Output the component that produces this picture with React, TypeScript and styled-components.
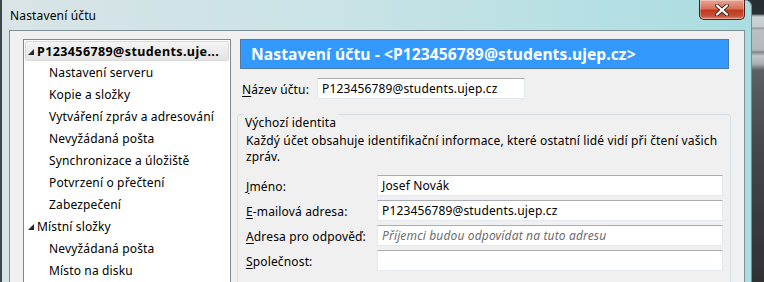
import React from "react";
import styled, { createGlobalStyle } from "styled-components";

const GlobalStyle = createGlobalStyle`
  html, body { margin: 0; padding: 0; }
  body {
    background: #2b3136;
    overflow: hidden;
    font-family: "Noto Sans", "Open Sans", sans-serif;
    letter-spacing: 0.15px;
  }
`;

const Desktop = styled.div`
  width: 764px;
  height: 282px;
  overflow: hidden;
  display: flex;
  align-items: flex-start;
  background: linear-gradient(
    180deg,
    #262d33 0px,
    #262d33 14px,
    #7c858b 15px,
    #cdd2d5 17px,
    #c6cbce 27px,
    #8e969b 28px,
    #b9bfc3 30px,
    #b3b9bd 50px,
    #7d868b 52px,
    #c2c7ca 56px,
    #a8aeb2 64px,
    #5b6165 70px,
    #45494c 140px,
    #2f3133 282px
  );
`;

const Window = styled.div`
  width: 736px;
  height: 300px;
  flex-shrink: 0;
  display: flex;
  flex-direction: column;
  border-left: 2px solid #3b474d;
  border-top-right-radius: 7px;
  padding: 0 7px;
  background: linear-gradient(90deg, #d9e4e6 0%, #c9e3e6 45%, #a9dde1 100%);
  box-shadow: inset -1px 0 0 #6d8f96;
`;

const TitleBar = styled.div`
  height: 30px;
  display: flex;
  justify-content: space-between;
  align-items: flex-start;
`;

const Title = styled.div`
  padding: 9px 0 0 1px;
  font-size: 12px;
  line-height: 14px;
  color: #000;
`;

const CloseButton = styled.div`
  width: 46px;
  height: 20px;
  box-sizing: border-box;
  display: flex;
  align-items: center;
  justify-content: center;
  border: 1px solid #4f1e16;
  border-top: none;
  border-radius: 0 0 5px 5px;
  background: linear-gradient(180deg, #e8a594 0%, #d9705a 45%, #c0391f 55%, #c7503a 85%, #e08a6e 100%);
  box-shadow: inset 0 0 0 1px rgba(255, 255, 255, 0.35);
`;

const Client = styled.div`
  flex: 1;
  display: flex;
  align-items: stretch;
  background: #f0f0f0;
  border: 1px solid #7f9197;
  border-bottom: none;
  padding: 8px 13px 0 13px;
`;

const Tree = styled.div`
  width: 208px;
  box-sizing: border-box;
  flex-shrink: 0;
  background: #fff;
  border: 1px solid #828790;
  padding: 1px;
  display: flex;
  flex-direction: column;
`;

const TreeRow = styled.div<{ $level: number; $selected?: boolean; $bold?: boolean }>`
  height: ${(p) => (p.$selected ? 20 : 22)}px;
  flex-shrink: 0;
  box-sizing: border-box;
  display: flex;
  align-items: center;
  padding-left: ${(p) => (p.$level === 0 ? 2 : 23)}px;
  font-size: ${(p) => (p.$bold ? 12.5 : 12)}px;
  letter-spacing: ${(p) => (p.$bold ? 0.4 : 0.15)}px;
  font-weight: ${(p) => (p.$bold ? 700 : 400)};
  color: #000;
  white-space: nowrap;
  border: 1px solid ${(p) => (p.$selected ? "#d9d9d9" : "transparent")};
  border-radius: 2px;
  background: ${(p) => (p.$selected ? "linear-gradient(180deg, #f4f4f4, #e4e4e4)" : "transparent")};
`;

const Expander = styled.svg`
  width: 6px;
  height: 6px;
  margin: 2px 3px 0 0;
  flex-shrink: 0;
`;

const RightCol = styled.div`
  width: 494px;
  margin-left: 6px;
  display: flex;
  flex-direction: column;
`;

const Header = styled.div`
  height: 30px;
  box-sizing: border-box;
  margin: 0 2px 0 3px;
  padding-left: 10px;
  display: flex;
  align-items: center;
  background: #3399ff;
  border: 1px solid #4d7aa8;
  color: #fff;
  font-size: 15.6px;
  letter-spacing: 0.1px;
  font-weight: 700;
  white-space: nowrap;
`;

const AccountRow = styled.div`
  display: flex;
  align-items: center;
  margin-top: 9px;
  padding-left: 5px;
`;

const Label = styled.label<{ $width?: number }>`
  font-size: 12px;
  color: #000;
  white-space: nowrap;
  padding-top: 1px;
  width: ${(p) => (p.$width ? `${p.$width}px` : "auto")};
  flex-shrink: 0;
`;

const Key = styled.span`
  text-decoration: underline;
  text-underline-offset: 2px;
`;

const TextBox = styled.div<{ $width: number; $placeholder?: boolean }>`
  width: ${(p) => p.$width}px;
  height: 21px;
  box-sizing: border-box;
  display: flex;
  align-items: center;
  padding-left: 4px;
  background: #fff;
  border: 1px solid #e3e9ef;
  border-top-color: #abadb3;
  font-size: 12px;
  white-space: nowrap;
  overflow: hidden;
  color: ${(p) => (p.$placeholder ? "#6d6d6d" : "#000")};
  font-style: ${(p) => (p.$placeholder ? "italic" : "normal")};
`;

const Group = styled.fieldset`
  margin: -2px 0 0 0;
  padding: 0 6px 0 8px;
  border: 1px solid #d5dfe5;
  border-radius: 3px;
  min-width: 0;
  flex: 1;
`;

const Legend = styled.legend`
  padding: 18px 2px 0 1px;
  margin-left: -2px;
  font-size: 12px;
  line-height: 16px;
  color: #000;
`;

const Description = styled.p`
  margin: 2px 0 0 0;
  font-size: 12px;
  line-height: 16px;
  color: #000;
`;

const FieldList = styled.div`
  display: flex;
  flex-direction: column;
  gap: 4px;
  margin-top: 10px;
`;

const FieldRow = styled.div`
  display: flex;
  align-items: center;
`;

const treeItems: { text: string; level: number; selected?: boolean; bold?: boolean; expander?: boolean }[] = [
  { text: "P123456789@students.uje...", level: 0, selected: true, bold: true, expander: true },
  { text: "Nastavení serveru", level: 1 },
  { text: "Kopie a složky", level: 1 },
  { text: "Vytváření zpráv a adresování", level: 1 },
  { text: "Nevyžádaná pošta", level: 1 },
  { text: "Synchronizace a úložiště", level: 1 },
  { text: "Potvrzení o přečtení", level: 1 },
  { text: "Zabezpečení", level: 1 },
  { text: "Místní složky", level: 0, expander: true },
  { text: "Nevyžádaná pošta", level: 1 },
  { text: "Místo na disku", level: 1 },
];

const fields: { key: string; rest: string; value: string; placeholder?: boolean }[] = [
  { key: "J", rest: "méno:", value: "Josef Novák" },
  { key: "E", rest: "-mailová adresa:", value: "P123456789@students.ujep.cz" },
  { key: "A", rest: "dresa pro odpověď:", value: "Příjemci budou odpovídat na tuto adresu", placeholder: true },
  { key: "S", rest: "polečnost:", value: "" },
];

export default function App() {
  return (
    <>
      <GlobalStyle />
      <Desktop>
        <Window>
          <TitleBar>
            <Title>Nastavení účtu</Title>
            <CloseButton>
              <svg width="16" height="12" viewBox="0 0 16 12">
                <path d="M3 1.5 L13 10.5 M13 1.5 L3 10.5" stroke="#4a2a24" strokeWidth="4" strokeLinecap="round" />
                <path d="M3 1.5 L13 10.5 M13 1.5 L3 10.5" stroke="#ffffff" strokeWidth="2.2" strokeLinecap="round" />
              </svg>
            </CloseButton>
          </TitleBar>
          <Client>
            <Tree>
              {treeItems.map((it, i) => (
                <TreeRow key={i} $level={it.level} $selected={it.selected} $bold={it.bold}>
                  {it.expander && (
                    <Expander viewBox="0 0 6 6">
                      <polygon points="6,0 6,6 0,6" fill="#262626" />
                    </Expander>
                  )}
                  {it.text}
                </TreeRow>
              ))}
            </Tree>
            <RightCol>
              <Header>Nastavení účtu - &lt;P123456789@students.ujep.cz&gt;</Header>
              <AccountRow>
                <Label $width={75}>
                  <Key>N</Key>ázev účtu:
                </Label>
                <TextBox $width={208}>P123456789@students.ujep.cz</TextBox>
              </AccountRow>
              <Group>
                <Legend>Výchozí identita</Legend>
                <Description>
                  Každý účet obsahuje identifikační informace, které ostatní lidé vidí při čtení vašich
                  <br />
                  zpráv.
                </Description>
                <FieldList>
                  {fields.map((f) => (
                    <FieldRow key={f.key}>
                      <Label $width={131}>
                        <Key>{f.key}</Key>
                        {f.rest}
                      </Label>
                      <TextBox $width={346} $placeholder={f.placeholder}>
                        {f.value}
                      </TextBox>
                    </FieldRow>
                  ))}
                </FieldList>
              </Group>
            </RightCol>
          </Client>
        </Window>
      </Desktop>
    </>
  );
}
